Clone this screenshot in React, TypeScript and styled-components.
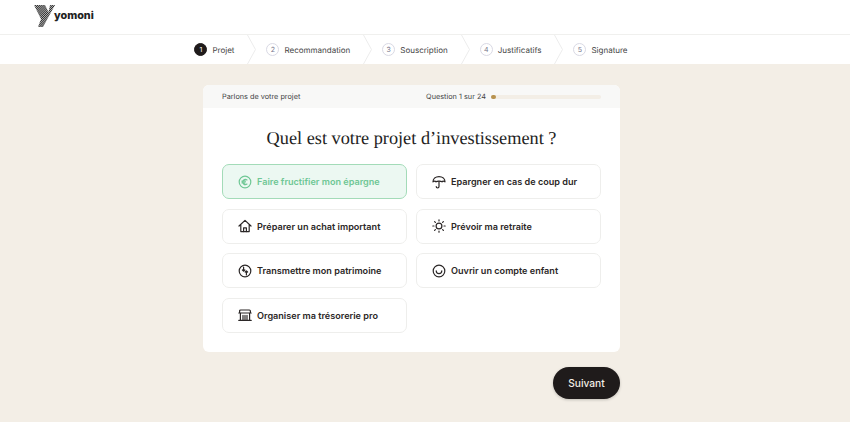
import { ReactNode } from 'react';
import styled, { createGlobalStyle } from 'styled-components';

const GlobalStyle = createGlobalStyle`
  * {
    box-sizing: border-box;
  }

  body {
    margin: 0;
    background: #f3eee6;
    font-family: 'Inter', 'Liberation Sans', sans-serif;
    color: #1f1b1b;
    text-rendering: geometricPrecision;
  }
`;

const STEPS = ['Projet', 'Recommandation', 'Souscription', 'Justificatifs', 'Signature'];

const Logo = () => (
  <svg width="23" height="27" viewBox="0 0 23 27" fill="none">
    <defs>
      <pattern id="stripes" width="1.5" height="1.5" patternUnits="userSpaceOnUse" patternTransform="rotate(45)">
        <rect width="1.5" height="1.5" fill="#ffffff" />
        <rect width="1" height="1.5" fill="#2b2b2b" />
      </pattern>
    </defs>
    <path d="M1 4 L12 4 L15.5 11 L17 4 L22 4 L10 26 L5 26 L8 18 Z" fill="url(#stripes)" />
  </svg>
);

const IconSvg = ({ children }: { children: ReactNode }) => (
  <svg width="14" height="14" viewBox="0 0 14 14" fill="none" stroke="currentColor" strokeWidth="1.2" strokeLinecap="round" strokeLinejoin="round">
    {children}
  </svg>
);

const OPTIONS: { label: string; icon: ReactNode; selected?: boolean }[] = [
  {
    label: 'Faire fructifier mon épargne',
    selected: true,
    icon: (
      <IconSvg>
        <circle cx="7" cy="7" r="5.8" />
        <path d="M9 4.9a2.6 2.6 0 1 0 0 4.2M3.9 6.2h3.6M3.9 7.8h3.2" />
      </IconSvg>
    ),
  },
  {
    label: 'Epargner en cas de coup dur',
    icon: (
      <IconSvg>
        <path d="M1 6.8C1 3.8 3.6 1.6 7 1.6s6 2.2 6 5.2c-1.2-.9-2.4-.9-3 0-1-.9-5-.9-6 0-.6-.9-1.8-.9-3 0Z" />
        <path d="M7 6.4v5.2a1.4 1.4 0 0 1-2.8 0" />
      </IconSvg>
    ),
  },
  {
    label: 'Préparer un achat important',
    icon: (
      <IconSvg>
        <path d="M1 7 7 1.4 13 7M2.8 5.6v7h8.4v-7" />
        <path d="M5.6 12.6V8.8h2.8v3.8" />
      </IconSvg>
    ),
  },
  {
    label: 'Prévoir ma retraite',
    icon: (
      <IconSvg>
        <circle cx="7" cy="7" r="2.9" />
        <path d="M7 .8v1.2M7 12v1.2M.8 7H2M12 7h1.2M2.6 2.6l.8.8M10.6 10.6l.8.8M2.6 11.4l.8-.8M10.6 3.4l.8-.8" />
      </IconSvg>
    ),
  },
  {
    label: 'Transmettre mon patrimoine',
    icon: (
      <IconSvg>
        <circle cx="7" cy="7" r="5.8" />
        <path d="M5.6 3v4.2M4.4 6l1.2 1.2L6.8 6M8.4 11V6.8M7.2 8l1.2-1.2L9.6 8" />
      </IconSvg>
    ),
  },
  {
    label: 'Ouvrir un compte enfant',
    icon: (
      <IconSvg>
        <circle cx="7" cy="7" r="5.8" />
        <path d="M4.2 6.8a2.8 2.8 0 0 0 5.6 0" />
      </IconSvg>
    ),
  },
  {
    label: 'Organiser ma trésorerie pro',
    icon: (
      <IconSvg>
        <path d="M1.6 5V3a1 1 0 0 1 1-1h8.8a1 1 0 0 1 1 1v2M.8 5h12.4M2.4 5v7M11.6 5v7M5 7.4V12M7 7.4V12M9 7.4V12M.8 12.4h12.4" />
      </IconSvg>
    ),
  },
];

export default function App() {
  return (
    <>
      <GlobalStyle />
      <Header>
        <Brand>
          <Logo />
          <BrandName>yomoni</BrandName>
        </Brand>
      </Header>
      <Stepper>
        {STEPS.map((step, index) => (
          <Step key={step}>
            {index > 0 && (
              <Chevron width="9" height="29" viewBox="0 0 9 29" fill="none">
                <path d="M0.5 0 L8.5 14.5 L0.5 29" stroke="#ececec" />
              </Chevron>
            )}
            <StepNumber $active={index === 0}>{index + 1}</StepNumber>
            <StepLabel>{step}</StepLabel>
          </Step>
        ))}
      </Stepper>
      <Main>
        <Card>
          <CardHeader>
            <CardHeaderTitle>Parlons de votre projet</CardHeaderTitle>
            <Progress>
              <ProgressLabel>Question 1 sur 24</ProgressLabel>
              <ProgressTrack>
                <ProgressFill style={{ width: `${(1 / 24) * 100}%` }} />
              </ProgressTrack>
            </Progress>
          </CardHeader>
          <CardBody>
            <Title>Quel est votre projet d’investissement ?</Title>
            <OptionGrid>
              {OPTIONS.map(option => (
                <Option key={option.label} $selected={option.selected}>
                  {option.icon}
                  {option.label}
                </Option>
              ))}
            </OptionGrid>
          </CardBody>
        </Card>
        <NextButton>Suivant</NextButton>
      </Main>
    </>
  );
}

const Header = styled.header`
  height: 35px;
  padding: 1px 0 0 33px;
  background: #fff;
  border-bottom: 1px solid #f0f0ee;
`;

const Brand = styled.div`
  display: flex;
  align-items: flex-start;
`;

const BrandName = styled.div`
  margin: 7px 0 0 -2px;
  font-size: 10.8px;
  font-weight: 800;
  line-height: 16px;
  color: #222;
`;

const Stepper = styled.nav`
  height: 29px;
  display: flex;
  justify-content: center;
  padding-right: 28px;
  background: #fff;
`;

const Step = styled.div`
  display: flex;
  align-items: center;
`;

const Chevron = styled.svg`
  margin: 0 10px 0 13px;
`;

const StepNumber = styled.span<{ $active?: boolean }>`
  width: 13px;
  height: 13px;
  display: flex;
  justify-content: center;
  align-items: center;
  margin-right: 5px;
  border-radius: 50%;
  border: 1px solid ${({ $active }) => ($active ? '#1f1b1b' : '#d9d9e4')};
  background: ${({ $active }) => ($active ? '#1f1b1b' : '#fff')};
  color: ${({ $active }) => ($active ? '#fff' : '#77778c')};
  font-size: 7px;
`;

const StepLabel = styled.span`
  font-size: 8px;
  color: #444;
`;

const Main = styled.main`
  width: 417px;
  margin: 21px 0 0 203px;
  display: flex;
  flex-direction: column;
  align-items: flex-end;
  padding-bottom: 23px;
`;

const Card = styled.section`
  width: 100%;
  height: 267px;
  border-radius: 6px;
  background: #fff;
  overflow: hidden;
`;

const CardHeader = styled.div`
  height: 23px;
  display: flex;
  align-items: center;
  justify-content: space-between;
  padding: 0 19px;
  background: #f8f8f7;
`;

const CardHeaderTitle = styled.div`
  font-size: 7.3px;
  color: #444;
`;

const Progress = styled.div`
  display: flex;
  align-items: center;
  gap: 5px;
`;

const ProgressLabel = styled.div`
  font-size: 7.3px;
  color: #444;
`;

const ProgressTrack = styled.div`
  width: 110px;
  height: 4px;
  border-radius: 2px;
  background: #f3eee6;
`;

const ProgressFill = styled.div`
  height: 100%;
  border-radius: 2px;
  background: #b8924f;
`;

const CardBody = styled.div`
  padding: 0 19px;
`;

const Title = styled.h1`
  margin: 0;
  height: 56px;
  padding-top: 4px;
  display: flex;
  align-items: center;
  justify-content: center;
  font-family: 'Liberation Serif', serif;
  font-size: 18.3px;
  font-weight: 400;
  color: #222;
`;

const OptionGrid = styled.div`
  display: grid;
  grid-template-columns: 185px 185px;
  grid-auto-rows: 35px;
  column-gap: 9px;
  row-gap: 9.6px;
`;

const Option = styled.button<{ $selected?: boolean }>`
  display: flex;
  align-items: center;
  gap: 5px;
  padding: 0 15px;
  border-radius: 7px;
  border: 1px solid ${({ $selected }) => ($selected ? '#a3dbb8' : '#eeeeec')};
  background: ${({ $selected }) => ($selected ? '#ecf8f2' : '#fff')};
  color: ${({ $selected }) => ($selected ? '#6fc795' : '#2b2727')};
  font-family: inherit;
  font-size: 9.1px;
  font-weight: 600;
`;

const NextButton = styled.button`
  width: 67px;
  height: 32px;
  margin-top: 15px;
  border: none;
  border-radius: 16px;
  background: #1f1b1b;
  box-shadow: 0 1px 3px rgba(0, 0, 0, 0.2);
  color: #f3eee6;
  font-family: inherit;
  font-size: 10.2px;
  font-weight: 500;
`;
